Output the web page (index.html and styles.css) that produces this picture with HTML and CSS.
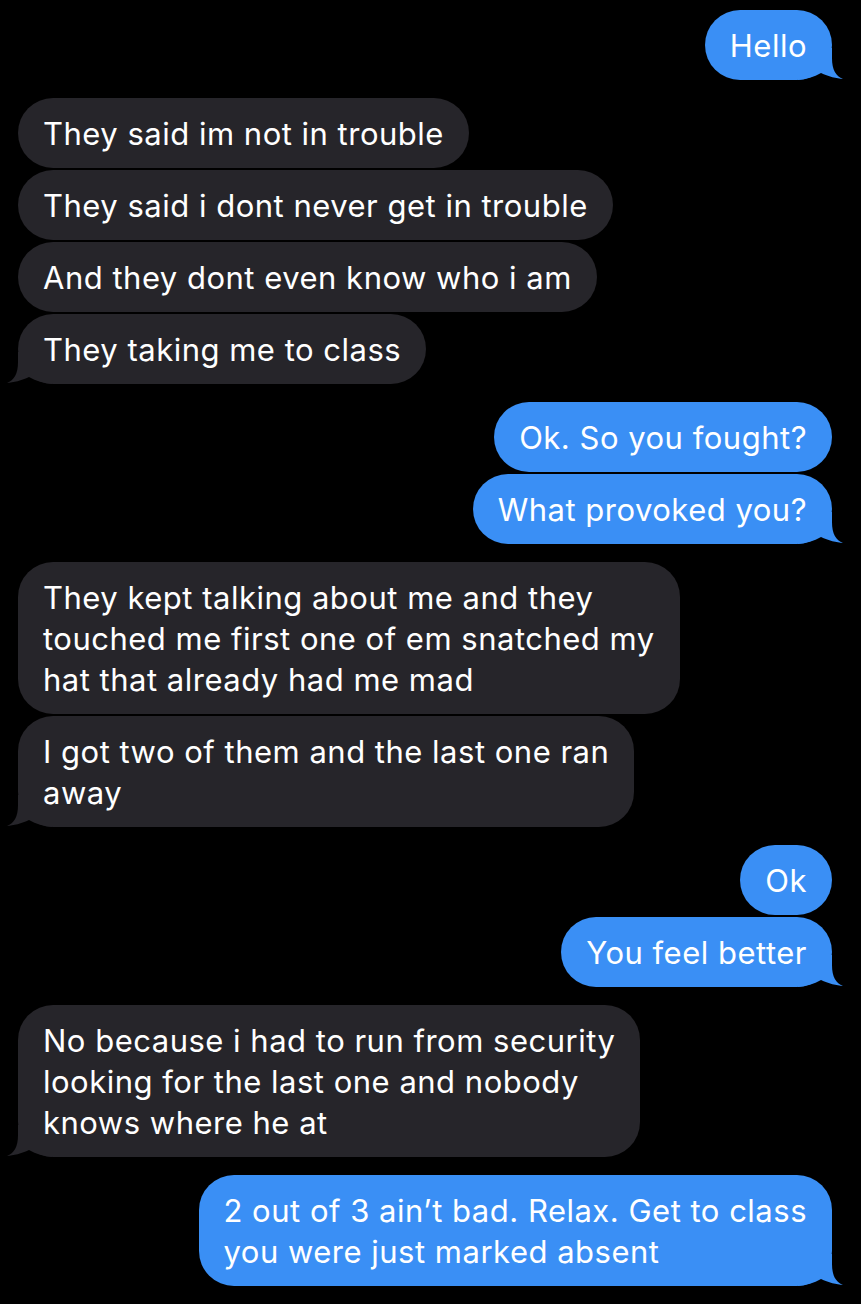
FILE: index.html
```html
<!DOCTYPE html>
<html lang="en">
<head>
    <meta charset="UTF-8">
    <meta name="viewport" content="width=device-width, initial-scale=1.0">
    <title>Messages</title>
    <link rel="stylesheet" href="styles.css">
</head>
<body>

    <div class="thread">

        <div class="group out">
            <div class="msg tail">Hello</div>
        </div>

        <div class="group in">
            <div class="msg">They said im not in trouble</div>
            <div class="msg">They said i dont never get in trouble</div>
            <div class="msg">And they dont even know who i am</div>
            <div class="msg tail">They taking me to class</div>
        </div>

        <div class="group out">
            <div class="msg">Ok. So you fought?</div>
            <div class="msg tail">What provoked you?</div>
        </div>

        <div class="group in">
            <div class="msg">They kept talking about me and they<br>touched me first one of em snatched my<br>hat that already had me mad</div>
            <div class="msg tail">I got two of them and the last one ran<br>away</div>
        </div>

        <div class="group out">
            <div class="msg">Ok</div>
            <div class="msg tail">You feel better</div>
        </div>

        <div class="group in">
            <div class="msg tail">No because i had to run from security<br>looking for the last one and nobody<br>knows where he at</div>
        </div>

        <div class="group out">
            <div class="msg tail">2 out of 3 ain’t bad. Relax. Get to class<br>you were just marked absent</div>
        </div>

    </div>

</body>
</html>
```

FILE: styles.css
```css
body {
    margin: 0;
    background-color: #000;
    color: #fff;
    font-family: Inter, "Noto Sans", sans-serif;
}
.thread {
    display: flex;
    flex-direction: column;
    gap: 18px;
    padding: 10px 29px 10px 18px;
}
.group {
    display: flex;
    flex-direction: column;
    gap: 2px;
}
.group.out {
    align-items: flex-end;
}
.group.in {
    align-items: flex-start;
}
.msg {
    position: relative;
    z-index: 0;
    max-width: 620px;
    padding: 15px 25px 14px;
    border-radius: 35px;
    font-size: 31px;
    line-height: 41px;
    letter-spacing: 0.5px;
}
.out .msg {
    background-color: #3a8ff5;
}
.in .msg {
    background-color: #26252a;
}

/* bubble tail, drawn under the text */
.msg.tail::before {
    content: "";
    position: absolute;
    z-index: -1;
    bottom: 0;
    width: 46px;
    height: 32px;
    background-color: inherit;
    clip-path: path("M0 32 L0 0 L34 0 L34 10 C34 22 38 28 45 31 C39 30.5 30 28.5 23 25 C16 29 8 31.5 0 32 Z");
}
.out .msg.tail::before {
    right: -12px;
}
.in .msg.tail::before {
    left: -12px;
    transform: scaleX(-1);
}
```
